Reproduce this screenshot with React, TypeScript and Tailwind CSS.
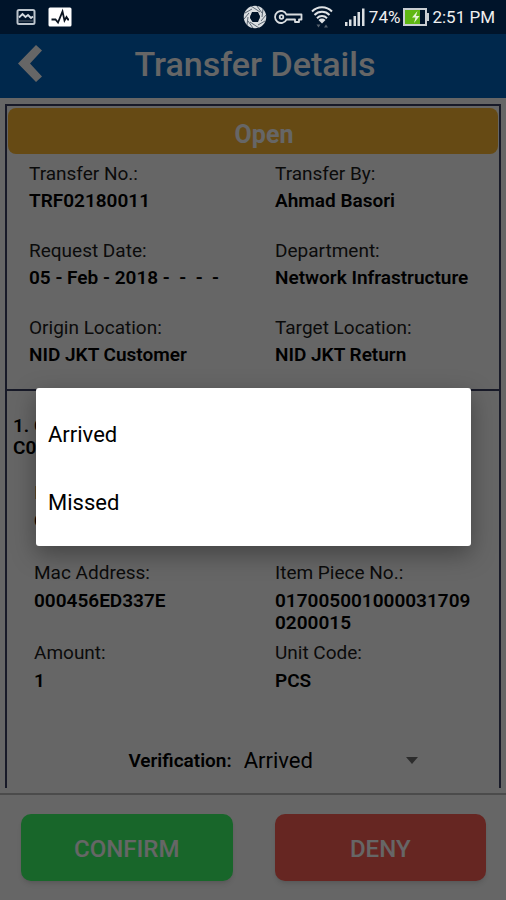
import React, { useState } from 'react';

type Field = { label: string; value: string };

const transferFields: Field[] = [
  { label: 'Transfer No.:', value: 'TRF02180011' },
  { label: 'Transfer By:', value: 'Ahmad Basori' },
  { label: 'Request Date:', value: '05 - Feb - 2018 -  -  -  -' },
  { label: 'Department:', value: 'Network Infrastructure' },
  { label: 'Origin Location:', value: 'NID JKT Customer' },
  { label: 'Target Location:', value: 'NID JKT Return' },
];

const itemFields: Field[] = [
  { label: 'Mac Address:', value: '000456ED337E' },
  { label: 'Item Piece No.:', value: '0170050010000317090200015' },
  { label: 'Amount:', value: '1' },
  { label: 'Unit Code:', value: 'PCS' },
];

const statuses = ['Arrived', 'Missed'];

const StatusBar: React.FC = () => (
  <div className="relative z-20 flex h-[34px] items-center justify-between bg-[#00142a] pr-[11px] pl-4 text-[17px] leading-[22px] text-[#f0f0f0]">
    <div className="flex items-center gap-3">
      <svg className="h-[18px] w-5" viewBox="0 0 20 18" fill="none">
        <rect x="1.500" y="2" width="17" height="14" rx="1.500" stroke="#bcc4cc" strokeWidth="2" />
        <path d="M3 9.500L6.500 6l3 3L12 7l3 3 2-1.500" stroke="#d4dae0" strokeWidth="1.800" />
        <path d="M3 13h14" stroke="#56616d" strokeWidth="1" />
      </svg>
      <svg className="h-5 w-6" viewBox="0 0 24 20" fill="none">
        <rect x="0.500" y="0.500" width="23" height="19" rx="1.500" fill="#fff" />
        <path d="M3.500 12.500h4l2.500 3 4.500-11 2 9 2-3.500 1.500 2.500h1" stroke="#0b1420" strokeWidth="1.800" />
      </svg>
    </div>
    <div className="flex items-center">
      <svg className="h-6 w-6" viewBox="0 0 24 24" fill="none">
        <circle cx="12" cy="12" r="8" stroke="#d9dde0" strokeWidth="6.500" />
        <path
          d="M8 1l9 6M14 1l5 7M20 4l-1 8M23 10l-5 6M22 16l-7 4M16 23l-9-6M10 23l-5-7M4 20l1-8M1 14l5-6M2 8l7-4"
          stroke="#4c5865"
          strokeWidth="0.900"
        />
        <path d="M9 7h6l2 4.500-2 5.500H9.500L7 12.500z" fill="#00142a" />
      </svg>
      <svg className="ml-[7px] h-4 w-[29px]" viewBox="0 0 29 16" fill="none" stroke="#d9dde0" strokeWidth="1.800">
        <path d="M12.500 5.500h15v5H25V13h-4v-2.500h-8.500A6 6 0 1 1 12.500 5.500z" strokeLinejoin="round" />
        <circle cx="7.500" cy="8" r="1.800" />
      </svg>
      <svg className="ml-2 h-[22px] w-[22px]" viewBox="0 0 22 22" fill="none">
        <g stroke="#dfe3e6" strokeWidth="2">
          <path d="M1 5.500a14 14 0 0 1 20 0" />
          <path d="M3.500 9a10.500 10.500 0 0 1 15 0" />
          <path d="M6 12.200a7 7 0 0 1 10 0" />
        </g>
        <path d="M7.500 14a5 5 0 0 1 7 0L11 17.500z" fill="#dfe3e6" />
        <path d="M5.500 18.500h4l-2 3zM13 21.500h4l-2-3z" fill="#56616d" />
      </svg>
      <svg className="ml-[11px] h-5 w-[22px]" viewBox="0 0 22 20" fill="#dadee1">
        <path d="M1 15h2.500v4H1zM5 12.500h2.500V19H5zM9.500 9H12v10H9.500zM13.500 5H16v14h-2.500zM18 1.500h2.500V19H18z" />
      </svg>
      <span className="ml-[3px]">74%</span>
      <svg className="ml-[3px] h-[18px] w-[26px]" viewBox="0 0 26 18">
        <rect x="1" y="1" width="22" height="16" fill="#00142a" stroke="#c9ced2" strokeWidth="2" />
        <path d="M23 5h3v8h-3z" fill="#c9ced2" />
        <path d="M2 2h15v14H2z" fill="#5fb813" />
        <path d="M14.500 3L9 9.500h3.500L11 15l5.500-7H13z" fill="#e6f3da" />
      </svg>
      <span className="ml-[3px]">2:51 PM</span>
    </div>
  </div>
);

const App: React.FC = () => {
  const [status, setStatus] = useState<string>('Arrived');
  const [isOpen, setIsOpen] = useState<boolean>(true);

  const handlePick = (value: string): void => {
    setStatus(value);
    setIsOpen(false);
  };

  return (
    <div className="relative flex min-h-screen flex-col bg-white font-[Roboto,sans-serif] text-[19px] leading-[22px] text-black">
      <StatusBar />

      <header className="relative flex h-16 items-center justify-center bg-[#0064be] pb-1 text-white">
        <button type="button" aria-label="Back" className="absolute top-[10px] left-4">
          <svg className="h-10 w-7" viewBox="0 0 28 40" fill="#fff">
            <path d="M20 1l6 5.500-12 13L26 32.500l-6 5.500L2 19.500z" />
          </svg>
        </button>
        <h1 className="pl-1 text-[34px] leading-10 font-medium">Transfer Details</h1>
      </header>

      <main className="flex-1 px-[5px] pt-1.5">
        <section className="border-x-2 border-t-2 border-[#3c4164]">
          <div className="p-px">
            <div className="mt-px rounded-lg bg-[#ffb832] pt-2 text-center text-[25px] leading-[38px] font-bold text-white">
              <span className="pl-[22px]">Open</span>
            </div>
          </div>
          <dl className="grid grid-cols-2 gap-y-7 pt-2 pb-[23px]">
            {transferFields.map((field) => (
              <div key={field.label} className="pl-[22px]">
                <dt className="text-[#1c1c1c]">{field.label}</dt>
                <dd className="mt-[5px] font-semibold whitespace-pre-wrap">{field.value}</dd>
              </div>
            ))}
          </dl>

          <div className="border-t-2 border-[#3c4164] pt-6">
            <h2 className="pl-1.5 font-semibold">
              1. C<br />
              C0
            </h2>
            <dl className="grid grid-cols-2 gap-y-2 pt-[23px]">
              <div className="col-span-2 min-h-[72px] pl-[27px]">
                <dt className="text-[#1c1c1c]">I</dt>
                <dd className="mt-1.5 font-semibold">C</dd>
              </div>
              {itemFields.map((field) => (
                <div key={field.label} className="pr-[26px] odd:pl-[22px] even:pl-[27px]">
                  <dt className="text-[#1c1c1c]">{field.label}</dt>
                  <dd className="mt-1.5 font-semibold break-all">{field.value}</dd>
                </div>
              ))}
            </dl>
            <div className="flex items-center justify-center pt-[54px] pb-3 pl-11">
              <label htmlFor="verification" className="font-semibold">
                Verification:
              </label>
              <div className="relative ml-3">
                <select
                  id="verification"
                  value={status}
                  onChange={(e) => setStatus(e.target.value)}
                  className="w-[178px] appearance-none bg-transparent text-[22px] leading-[30px]"
                >
                  {statuses.map((item) => (
                    <option key={item}>{item}</option>
                  ))}
                </select>
                <svg className="pointer-events-none absolute top-[11px] right-1 h-[7px] w-3" viewBox="0 0 12 7" fill="#6f6f6f">
                  <path d="M0 0h12L6 7z" />
                </svg>
              </div>
            </div>
          </div>
        </section>
      </main>

      <footer className="mt-[5px] grid grid-cols-2 gap-[42px] border-t-2 border-[#bbb] pt-[19px] pr-5 pb-[19px] pl-[21px] text-[24px] leading-7 font-medium text-white">
        <button type="button" className="h-[67px] rounded-[10px] bg-[#3cff69] pt-0.5 shadow-md">
          CONFIRM
        </button>
        <button type="button" className="h-[67px] rounded-[10px] bg-[#ff5f55] pt-0.5 shadow-md">
          DENY
        </button>
      </footer>

      {isOpen && (
        <div className="absolute inset-x-0 top-[34px] bottom-0 z-10 flex items-center bg-black/60 pr-[35px] pl-9">
          <ul className="w-full rounded-[3px] bg-white pt-3 pb-2.5 text-[22px] shadow-[0_8px_24px_rgba(0,0,0,0.35)]">
            {statuses.map((item) => (
              <li key={item}>
                <button type="button" className="h-[68px] w-full px-3 pt-px text-left" onClick={() => handlePick(item)}>
                  {item}
                </button>
              </li>
            ))}
          </ul>
        </div>
      )}
    </div>
  );
};

export default App;
